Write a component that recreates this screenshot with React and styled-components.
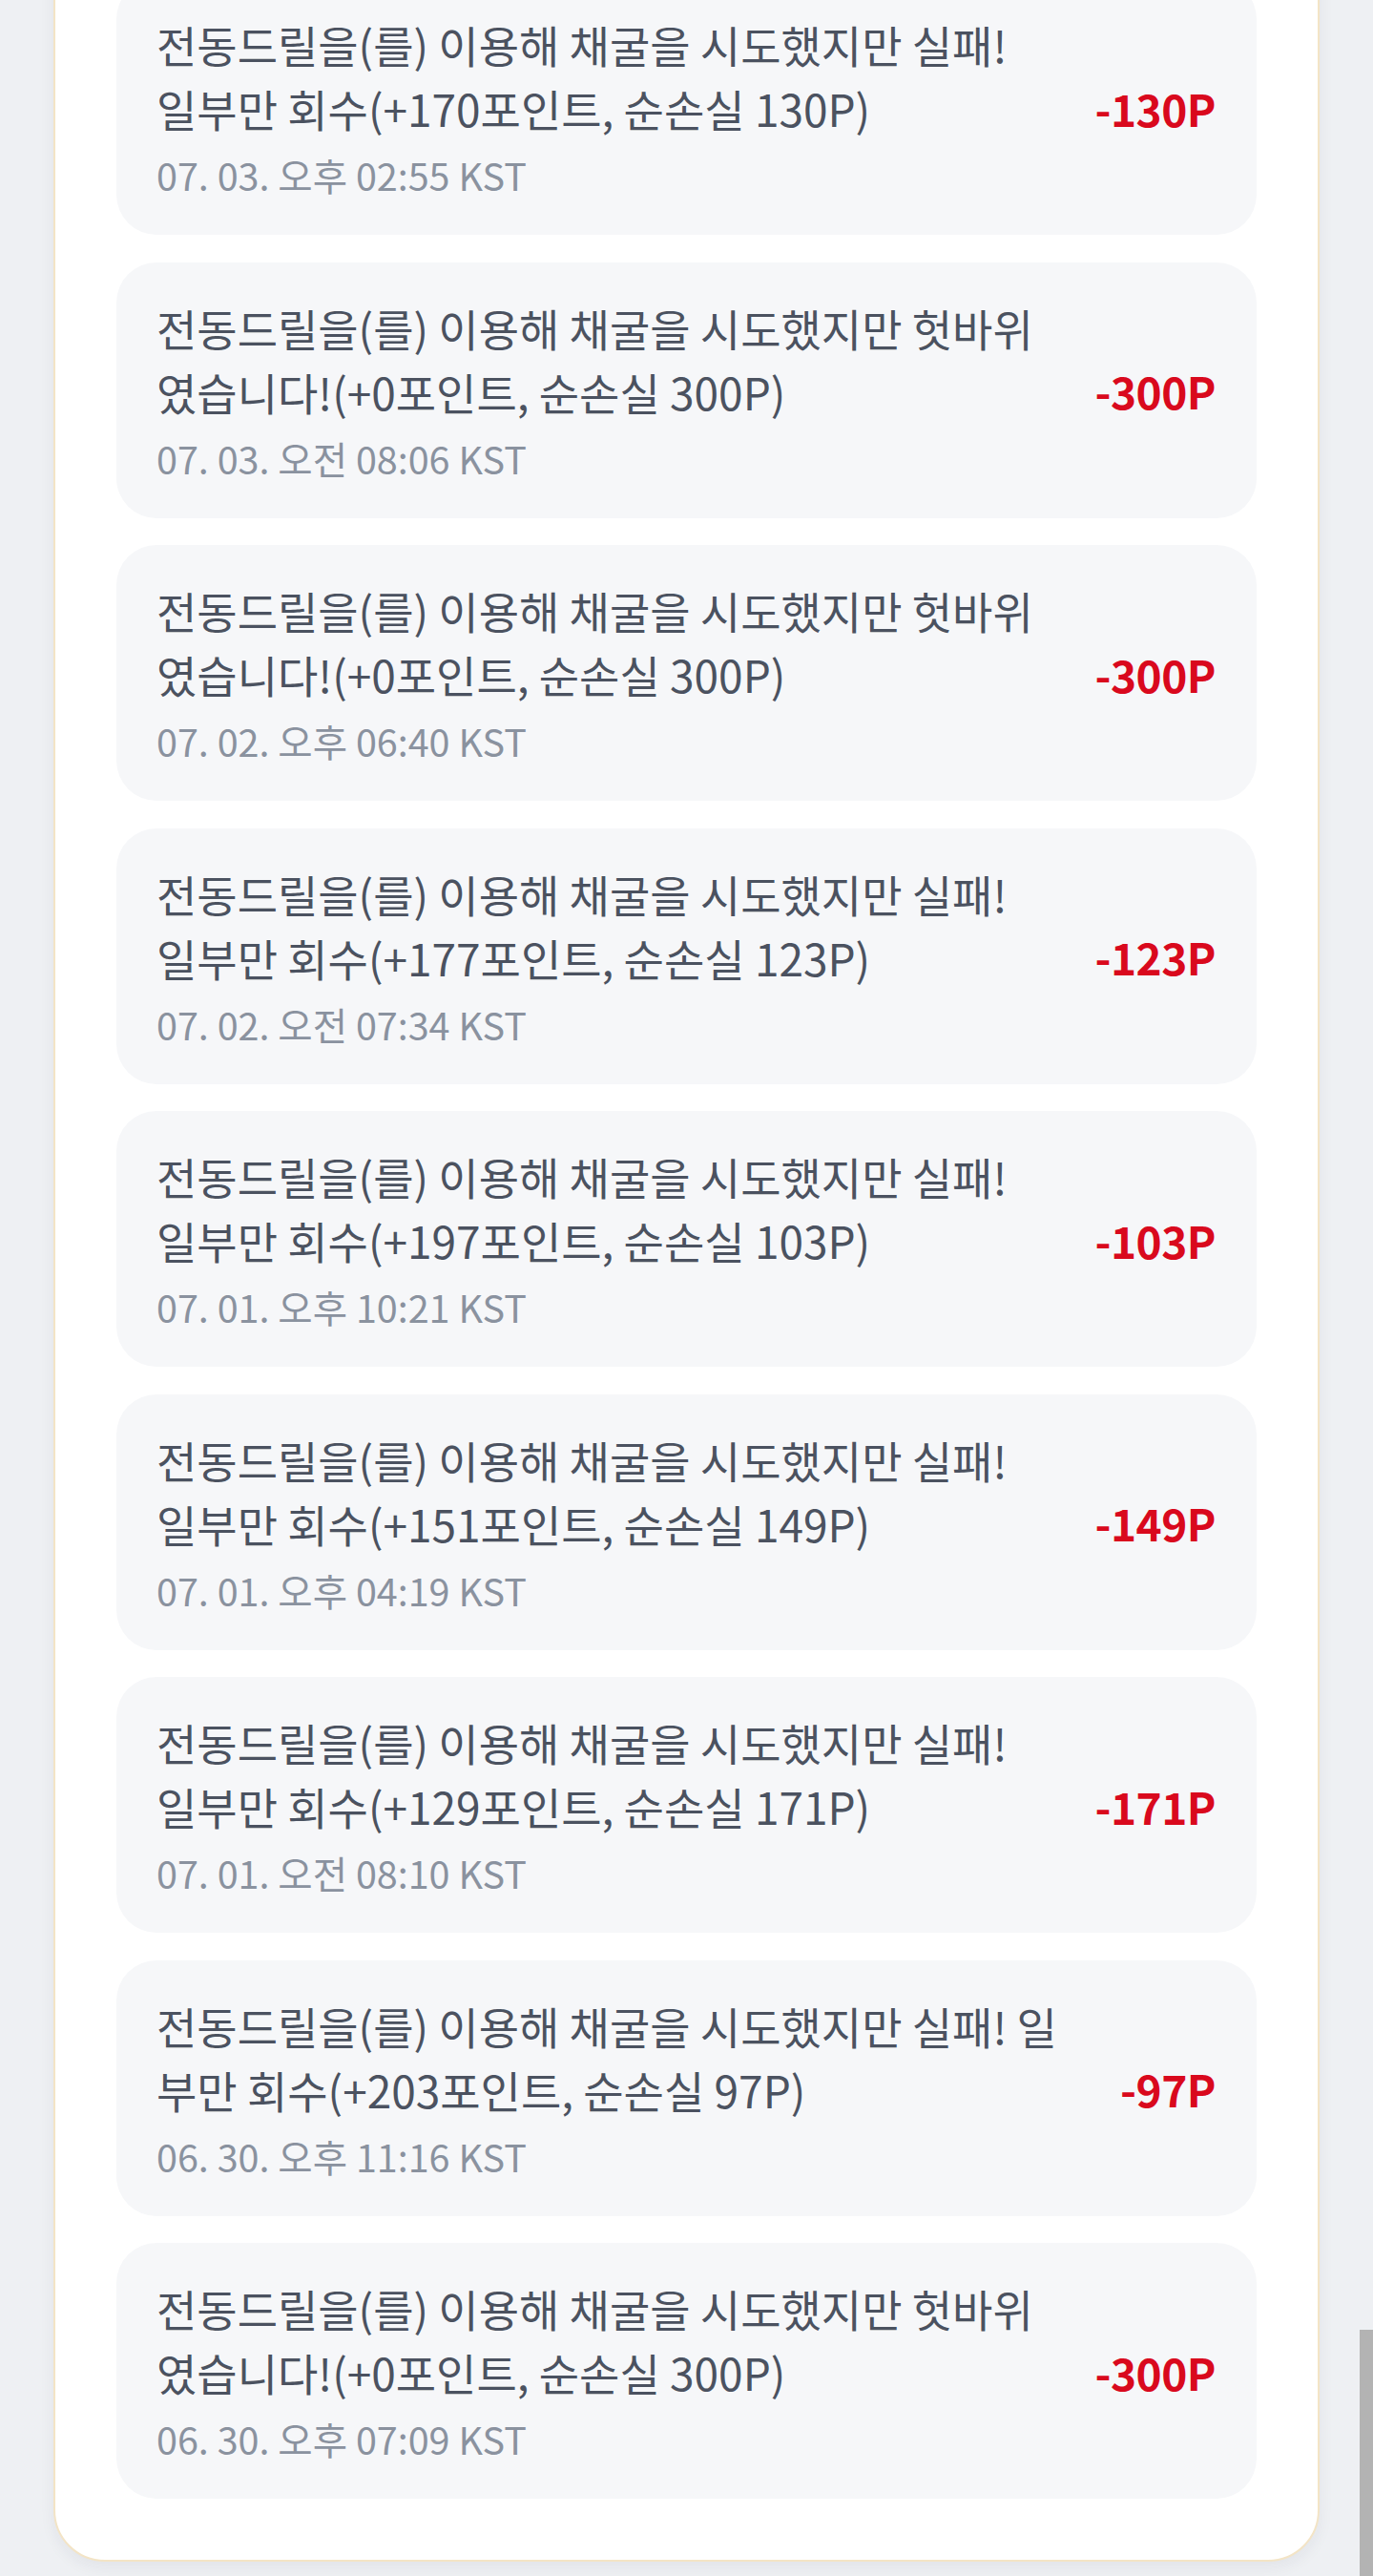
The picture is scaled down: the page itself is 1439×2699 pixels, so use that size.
import React from "react";
import styled, { createGlobalStyle } from "styled-components";

const GlobalStyle = createGlobalStyle`
  html, body {
    margin: 0;
    padding: 0;
    background: #eef0f3;
    font-family: "Noto Sans CJK KR", "Noto Sans", sans-serif;
  }
  body {
    overflow: hidden;
  }
`;

const Page = styled.div`
  height: 2699px;
  overflow: hidden;
  padding: 0 56px;
  box-sizing: border-box;
`;

const Card = styled.section`
  margin-top: -90px;
  background: #ffffff;
  border: 2px solid #f3e4c6;
  border-radius: 54px;
  padding: 66px 64px 64px 64px;
  box-shadow: 0 6px 16px rgba(30, 40, 60, 0.06);
  display: flex;
  flex-direction: column;
  gap: 28.5px;
`;

const Item = styled.div`
  background: #f6f7f9;
  border-radius: 42px;
  padding: 35px 43px 34px 42px;
  display: flex;
  align-items: center;
  gap: 50px;
`;

const Body = styled.div`
  flex: 1;
  min-width: 0;
  display: flex;
  flex-direction: column;
`;

const Message = styled.p`
  margin: 0;
  font-size: 46px;
  line-height: 67px;
  color: #4b5260;
  font-weight: 400;
`;

const Time = styled.span`
  margin-top: 7px;
  font-size: 39.5px;
  line-height: 58px;
  color: #8a929f;
`;

const Amount = styled.span`
  flex: none;
  font-size: 46px;
  font-weight: 700;
  color: #d9091d;
  letter-spacing: -0.5px;
`;

const ScrollThumb = styled.div`
  position: fixed;
  right: 0;
  bottom: 0;
  width: 14px;
  height: 258px;
  background: #b3b3b3;
`;

const FAIL = "전동드릴을(를) 이용해 채굴을 시도했지만 실패! 일부만 회수";
const MISS = "전동드릴을(를) 이용해 채굴을 시도했지만 헛바위였습니다!(+0포인트, 순손실 300P)";

const rows = [
  { msg: `${FAIL}(+170포인트, 순손실 130P)`, time: "07. 03. 오후 02:55 KST", amount: "-130P" },
  { msg: MISS, time: "07. 03. 오전 08:06 KST", amount: "-300P" },
  { msg: MISS, time: "07. 02. 오후 06:40 KST", amount: "-300P" },
  { msg: `${FAIL}(+177포인트, 순손실 123P)`, time: "07. 02. 오전 07:34 KST", amount: "-123P" },
  { msg: `${FAIL}(+197포인트, 순손실 103P)`, time: "07. 01. 오후 10:21 KST", amount: "-103P" },
  { msg: `${FAIL}(+151포인트, 순손실 149P)`, time: "07. 01. 오후 04:19 KST", amount: "-149P" },
  { msg: `${FAIL}(+129포인트, 순손실 171P)`, time: "07. 01. 오전 08:10 KST", amount: "-171P" },
  { msg: `${FAIL}(+203포인트, 순손실 97P)`, time: "06. 30. 오후 11:16 KST", amount: "-97P" },
  { msg: MISS, time: "06. 30. 오후 07:09 KST", amount: "-300P" },
];

export default function App() {
  return (
    <>
      <GlobalStyle />
      <Page>
        <Card>
          {rows.map((r, i) => (
            <Item key={i}>
              <Body>
                <Message>{r.msg}</Message>
                <Time>{r.time}</Time>
              </Body>
              <Amount>{r.amount}</Amount>
            </Item>
          ))}
        </Card>
      </Page>
      <ScrollThumb />
    </>
  );
}
